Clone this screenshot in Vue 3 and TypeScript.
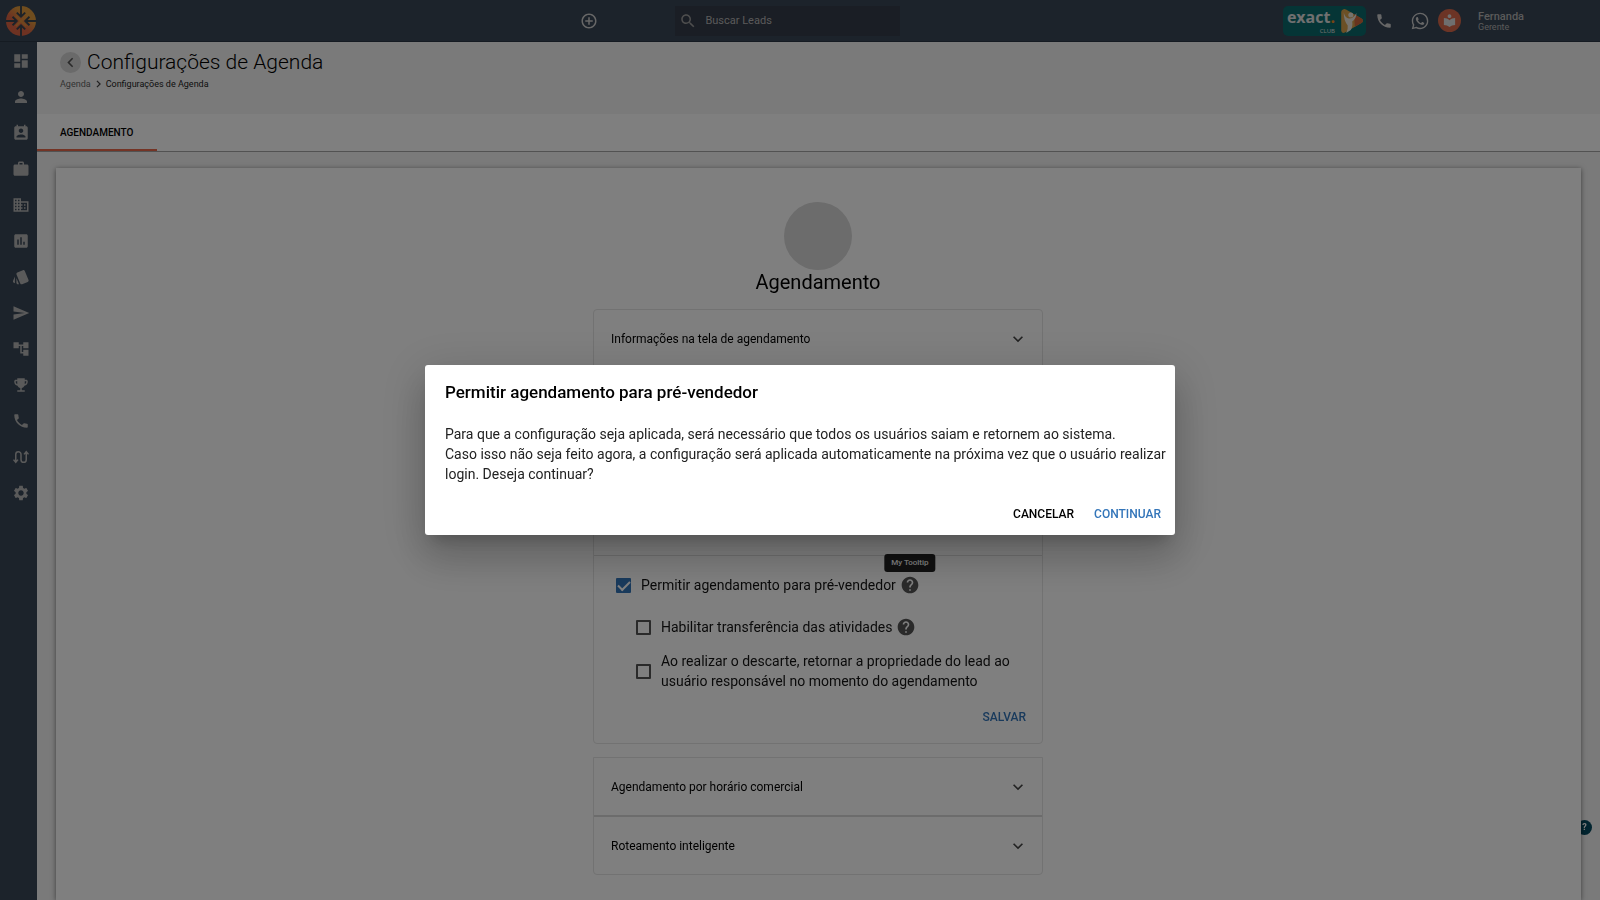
<script setup lang="ts">
import { ref } from 'vue'

interface NavItem {
  label: string
  path: string
  stroke?: boolean
}

const phonePath =
  'M6.62 10.79c1.44 2.83 3.76 5.14 6.59 6.59l2.2-2.2c.27-.27.67-.36 1.02-.24 1.12.37 2.33.57 3.57.57.55 0 1 .45 1 1V20c0 .55-.45 1-1 1-9.39 0-17-7.61-17-17 0-.55.45-1 1-1h3.5c.55 0 1 .45 1 1 0 1.25.2 2.45.57 3.57.11.35.03.74-.25 1.02l-2.2 2.2z'
const helpPath =
  'M12 2C6.48 2 2 6.48 2 12s4.48 10 10 10 10-4.48 10-10S17.52 2 12 2zm1 17h-2v-2h2v2zm2.07-7.75l-.9.92C13.45 12.9 13 13.5 13 15h-2v-.5c0-1.1.45-2.1 1.17-2.83l1.24-1.26c.37-.36.59-.86.59-1.41 0-1.1-.9-2-2-2s-2 .9-2 2H8c0-2.21 1.79-4 4-4s4 1.79 4 4c0 .88-.36 1.68-.93 2.25z'
const chevronDown = 'M7.41 8.59L12 13.17l4.59-4.58L18 10l-6 6-6-6z'

const navItems: NavItem[] = [
  { label: 'Painel', path: 'M3 13h8V3H3v10zm0 8h8v-6H3v6zm10 0h8V11h-8v10zm0-18v6h8V3h-8z' },
  { label: 'Leads', path: 'M12 12c2.21 0 4-1.79 4-4s-1.79-4-4-4-4 1.79-4 4 1.79 4 4 4zm0 2c-2.67 0-8 1.34-8 4v2h16v-2c0-2.66-5.33-4-8-4z' },
  { label: 'Agenda', path: 'M19 3h-1V1h-2v2H8V1H6v2H5c-1.11 0-2 .9-2 2v14c0 1.1.89 2 2 2h14c1.1 0 2-.9 2-2V5c0-1.1-.9-2-2-2zm-7 3c1.66 0 3 1.34 3 3s-1.34 3-3 3-3-1.34-3-3 1.34-3 3-3zm6 12H6v-1c0-2 4-3.1 6-3.1s6 1.1 6 3.1v1z' },
  { label: 'Vendas', path: 'M20 6h-4V4c0-1.11-.89-2-2-2h-4c-1.11 0-2 .89-2 2v2H4c-1.11 0-1.99.89-1.99 2L2 19c0 1.11.89 2 2 2h16c1.11 0 2-.89 2-2V8c0-1.11-.89-2-2-2zm-6 0h-4V4h4v2z' },
  { label: 'Empresas', path: 'M12 7V3H2v18h20V7H12zM6 19H4v-2h2v2zm0-4H4v-2h2v2zm0-4H4V9h2v2zm0-4H4V5h2v2zm4 12H8v-2h2v2zm0-4H8v-2h2v2zm0-4H8V9h2v2zm0-4H8V5h2v2zm10 12h-8v-2h2v-2h-2v-2h2v-2h-2V9h8v10zm-2-8h-2v2h2v-2zm0 4h-2v2h2v-2z' },
  { label: 'Relatórios', path: 'M19 3H5c-1.1 0-2 .9-2 2v14c0 1.1.9 2 2 2h14c1.1 0 2-.9 2-2V5c0-1.1-.9-2-2-2zM9 17H7v-7h2v7zm4 0h-2V7h2v10zm4 0h-2v-4h2v4z' },
  { label: 'Cartões', path: 'M2.53 19.65l1.34.56v-9.03l-2.43 5.86c-.41 1.02.08 2.19 1.09 2.61zm19.5-3.7L17.07 3.98c-.31-.75-1.04-1.21-1.81-1.23-.26 0-.53.04-.79.15L7.1 5.95c-.75.31-1.21 1.03-1.23 1.8-.01.27.04.54.15.8l4.96 11.97c.31.76 1.05 1.22 1.83 1.23.26 0 .52-.05.77-.15l7.36-3.05c1.02-.42 1.51-1.59 1.09-2.6zM5.88 19.75c0 1.1.9 2 2 2h1.45l-3.45-8.34v6.34z' },
  { label: 'Envios', path: 'M2.01 21L23 12 2.01 3 2 10l15 2-15 2z' },
  { label: 'Fluxos', path: 'M22 11V3h-7v3H9V3H2v8h7V8h2v10h4v3h7v-8h-7v3h-2V8h2v3z' },
  { label: 'Metas', path: 'M19 5h-2V3H7v2H5c-1.1 0-2 .9-2 2v1c0 2.55 1.92 4.63 4.39 4.94.63 1.5 1.98 2.63 3.61 2.96V19H7v2h10v-2h-4v-3.1c1.63-.33 2.98-1.46 3.61-2.96C19.08 12.63 21 10.55 21 8V7c0-1.1-.9-2-2-2zM5 8V7h2v3.82C5.84 10.4 5 9.3 5 8zm14 0c0 1.3-.84 2.4-2 2.82V7h2v1z' },
  { label: 'Ligações', path: phonePath },
  { label: 'Integrações', path: 'M2 15.5l3 3.500 3-3.500M5 18V8.500a3.500 3.500 0 0 1 7 0v7a3.500 3.500 0 0 0 7 0V6M16 8.500l3-3.500 3 3.500', stroke: true },
  { label: 'Configurações', path: 'M19.14 12.94c.04-.3.06-.61.06-.94 0-.32-.02-.64-.07-.94l2.030-1.580c.18-.14.23-.41.12-.61l-1.920-3.320c-.12-.22-.37-.29-.59-.22l-2.390.96c-.5-.38-1.030-.7-1.620-.94l-.36-2.540c-.04-.24-.24-.41-.48-.41h-3.840c-.24 0-.43.17-.47.41l-.36 2.540c-.59.24-1.130.57-1.620.94l-2.390-.96c-.22-.08-.47 0-.59.22L2.740 8.870c-.12.21-.08.47.12.61l2.030 1.580c-.05.3-.09.63-.09.94s.02.64.07.94l-2.030 1.580c-.18.14-.23.41-.12.61l1.920 3.320c.12.22.37.29.59.22l2.390-.96c.5.38 1.030.7 1.620.94l.36 2.540c.05.24.24.41.48.41h3.840c.24 0 .44-.17.47-.41l.36-2.540c.59-.24 1.130-.56 1.620-.94l2.390.96c.22.08.47 0 .59-.22l1.920-3.320c.12-.22.07-.47-.12-.61l-2.010-1.580zM12 15.600c-1.980 0-3.600-1.620-3.600-3.600s1.620-3.600 3.600-3.600 3.600 1.620 3.600 3.600-1.620 3.600-3.600 3.600z' },
]

const closedSections: string[] = ['Agendamento por horário comercial', 'Roteamento inteligente']

const allowScheduling = ref(true)
const enableTransfer = ref(false)
const returnOwnership = ref(false)
const dialogOpen = ref(true)
</script>

<template>
  <div class="shell">
    <header class="topbar">
      <a href="#" class="brand" aria-label="Exact">
        <svg viewBox="0 0 32 32" width="30" height="30">
          <defs>
            <linearGradient id="brandFill" x1="1" y1="0" x2="0.2" y2="1">
              <stop offset="0.35" stop-color="#e09a3c" />
              <stop offset="0.65" stop-color="#dd6444" />
            </linearGradient>
          </defs>
          <circle cx="16" cy="16" r="16" fill="url(#brandFill)" />
          <g fill="none" stroke="#38444f" stroke-width="2">
            <path d="M16 0v11M16 32V21M0 16h11M32 16H21" />
            <path d="M11.500 7l4.500 4.500L20.500 7M11.500 25l4.500-4.500 4.500 4.500M7 11.500l4.500 4.500L7 20.500M25 11.500L20.500 16l4.500 4.500" />
          </g>
          <path d="M10.500 10.500l11 11M21.500 10.500l-11 11" stroke="#e0903c" stroke-width="2" />
        </svg>
      </a>
      <div class="tools">
        <button type="button" class="plain" aria-label="Adicionar">
          <svg viewBox="0 0 24 24" width="18" height="18"><path fill="currentColor" d="M13 7h-2v4H7v2h4v4h2v-4h4v-2h-4V7zm-1-5C6.480 2 2 6.480 2 12s4.480 10 10 10 10-4.480 10-10S17.520 2 12 2zm0 18c-4.410 0-8-3.590-8-8s3.590-8 8-8 8 3.590 8 8-3.590 8-8 8z" /></svg>
        </button>
        <label class="search">
          <svg viewBox="0 0 24 24" width="18" height="18"><path fill="currentColor" d="M15.500 14h-.79l-.28-.27C15.410 12.590 16 11.110 16 9.500 16 5.910 13.090 3 9.500 3S3 5.910 3 9.500 5.910 16 9.500 16c1.610 0 3.090-.59 4.230-1.570l.27.28v.79l5 4.990L20.490 19l-4.990-5zm-6 0C7.010 14 5 11.990 5 9.500S7.010 5 9.500 5 14 7.010 14 9.500 11.990 14 9.500 14z" /></svg>
          <input type="search" placeholder="Buscar Leads" aria-label="Buscar Leads" />
        </label>
      </div>
      <div class="account">
        <a href="#" class="club" aria-label="Exact Club">
          <span class="club-name">
            <span class="club-title">exact<i>.</i></span>
            <span class="club-sub">CLUB</span>
          </span>
          <svg viewBox="0 0 24 26" width="24" height="26">
            <path d="M3 1.500Q4 .6 6 1.400L21.500 10.500q2.800 2 .4 4.200L5 24.500Q1.500 26 1.200 22.500V4Q1.300 2 3 1.500z" fill="#d9a04a" />
            <path d="M14 6l7.500 4.500q2.800 2 .4 4.200l-7 4z" fill="#d0663c" />
            <circle cx="10.800" cy="7" r="2.500" fill="#ece7dc" />
            <path d="M3.800 4.500Q5 10 9 10.500q4 .3 7.500-5.500-.3 6-4.300 8.500.8 5-1.400 8.500l-4.600 3q2-4 1.500-7.500Q3.500 12 3.800 4.500z" fill="#ece7dc" />
          </svg>
        </a>
        <button type="button" class="plain phone" aria-label="Telefone">
          <svg viewBox="0 0 24 24" width="18" height="18"><path fill="currentColor" :d="phonePath" /></svg>
        </button>
        <button type="button" class="plain whats" aria-label="WhatsApp">
          <svg viewBox="0 0 24 24" width="20" height="20"><path fill="currentColor" d="M12.040 2c-5.460 0-9.910 4.450-9.910 9.910 0 1.750.46 3.450 1.320 4.950L2.050 22l5.250-1.380c1.450.79 3.080 1.210 4.740 1.210 5.460 0 9.910-4.450 9.910-9.910 0-2.650-1.030-5.140-2.900-7.010A9.816 9.816 0 0 0 12.040 2m.01 1.670c2.200 0 4.260.86 5.820 2.420a8.225 8.225 0 0 1 2.410 5.830c0 4.540-3.700 8.230-8.240 8.230-1.480 0-2.930-.39-4.190-1.150l-.3-.17-3.120.82.83-3.040-.2-.32a8.188 8.188 0 0 1-1.260-4.380c.01-4.540 3.700-8.240 8.250-8.240M8.530 7.330c-.16 0-.43.06-.66.31-.22.25-.87.86-.87 2.070 0 1.220.89 2.390 1 2.560.14.17 1.760 2.670 4.250 3.730.59.27 1.050.42 1.410.53.59.19 1.130.16 1.560.1.48-.07 1.460-.6 1.670-1.180.21-.58.21-1.070.15-1.180-.07-.1-.23-.16-.48-.27-.25-.14-1.470-.74-1.690-.82-.23-.08-.37-.12-.56.12-.16.25-.64.81-.78.97-.15.17-.29.19-.53.07-.26-.13-1.060-.39-2-1.230-.74-.66-1.230-1.470-1.380-1.720-.12-.24-.01-.39.11-.5.11-.11.27-.29.37-.44.13-.14.17-.25.25-.41.08-.17.04-.31-.02-.43-.06-.11-.56-1.350-.77-1.840-.2-.48-.4-.42-.56-.43-.14 0-.3-.01-.47-.01z" /></svg>
        </button>
        <span class="avatar">
          <svg viewBox="0 0 24 24" width="15" height="15"><path fill="#dedede" d="M12 11.550C9.640 9.350 6.480 8 3 8v11c3.480 0 6.640 1.350 9 3.550 2.360-2.190 5.520-3.550 9-3.550V8c-3.480 0-6.640 1.350-9 3.550zM12 8c1.660 0 3-1.340 3-3s-1.340-3-3-3-3 1.340-3 3 1.340 3 3 3z" /></svg>
        </span>
        <div class="user">
          <strong>Fernanda</strong>
          <span>Gerente</span>
        </div>
      </div>
    </header>

    <div class="body">
      <nav class="sidebar" aria-label="Menu principal">
        <a v-for="item in navItems" :key="item.label" href="#" :aria-label="item.label">
          <svg viewBox="0 0 24 24" width="18" height="18">
            <path v-if="item.stroke" :d="item.path" fill="none" stroke="currentColor" stroke-width="2" />
            <path v-else :d="item.path" fill="currentColor" />
          </svg>
        </a>
      </nav>

      <main class="page">
        <div class="heading">
          <div class="title-row">
            <button type="button" class="back" aria-label="Voltar">
              <svg viewBox="0 0 24 24" width="19" height="19"><path fill="currentColor" d="M15.410 7.410L14 6l-6 6 6 6 1.410-1.410L10.830 12z" /></svg>
            </button>
            <h1>Configurações de Agenda</h1>
          </div>
          <div class="crumbs">
            <a href="#">Agenda</a>
            <svg viewBox="0 0 8 12" width="5" height="8"><path d="M1.500 1l5 5-5 5" fill="none" stroke="#444" stroke-width="2" /></svg>
            <span>Configurações de Agenda</span>
          </div>
        </div>
        <div class="tabs" role="tablist">
          <button type="button" role="tab" aria-selected="true">AGENDAMENTO</button>
        </div>

        <div class="card">
          <div class="disc"></div>
          <h2>Agendamento</h2>
          <div class="group">
            <button type="button" class="row">
              <span>Informações na tela de agendamento</span>
              <svg viewBox="0 0 24 24" width="20" height="20"><path fill="currentColor" :d="chevronDown" /></svg>
            </button>
            <div class="gap"></div>
            <form class="options" @submit.prevent>
              <div class="option">
                <input id="allow" v-model="allowScheduling" type="checkbox" />
                <label for="allow">Permitir agendamento para pré-vendedor</label>
                <span class="hint">
                  <svg viewBox="0 0 24 24" width="20" height="20"><path fill="currentColor" :d="helpPath" /></svg>
                  <span class="tooltip" role="tooltip">My Tooltip</span>
                </span>
              </div>
              <div class="option nested">
                <input id="transfer" v-model="enableTransfer" type="checkbox" />
                <label for="transfer">Habilitar transferência das atividades</label>
                <span class="hint">
                  <svg viewBox="0 0 24 24" width="20" height="20"><path fill="currentColor" :d="helpPath" /></svg>
                </span>
              </div>
              <div class="option nested">
                <input id="ownership" v-model="returnOwnership" type="checkbox" />
                <label for="ownership">Ao realizar o descarte, retornar a propriedade do lead ao<br />usuário responsável no momento do agendamento</label>
              </div>
              <button type="submit" class="save">SALVAR</button>
            </form>
          </div>
          <div class="group lower">
            <button v-for="name in closedSections" :key="name" type="button" class="row">
              <span>{{ name }}</span>
              <svg viewBox="0 0 24 24" width="20" height="20"><path fill="currentColor" :d="chevronDown" /></svg>
            </button>
          </div>
        </div>
      </main>
    </div>

    <button type="button" class="support" aria-label="Ajuda">?</button>

    <div v-if="dialogOpen" class="backdrop">
      <section class="dialog" role="dialog" aria-modal="true" aria-labelledby="dialog-title">
        <h2 id="dialog-title">Permitir agendamento para pré-vendedor</h2>
        <p>
          Para que a configuração seja aplicada, será necessário que todos os usuários saiam e retornem ao sistema.<br />
          Caso isso não seja feito agora, a configuração será aplicada automaticamente na próxima vez que o usuário realizar login. Deseja continuar?
        </p>
        <div class="actions">
          <button type="button" @click="dialogOpen = false">CANCELAR</button>
          <button type="button" class="primary" @click="dialogOpen = false">CONTINUAR</button>
        </div>
      </section>
    </div>
  </div>
</template>

<style>
body {
  margin: 0;
}
</style>

<style scoped>
* {
  box-sizing: border-box;
}
.shell {
  display: flex;
  flex-direction: column;
  min-height: 100vh;
  font-family: Roboto, "Liberation Sans", sans-serif;
  font-size: 14px;
  color: #000;
  background: #f4f4f4;
}
svg {
  display: block;
  flex: none;
}
button {
  font: inherit;
  color: inherit;
  background: none;
  border: 0;
  padding: 0;
  cursor: pointer;
}
.topbar {
  display: grid;
  grid-template-columns: 37px 544fr auto 383fr auto;
  align-items: center;
  height: 42px;
  background: #384656;
  color: #cfcfcf;
  border-bottom: 1px solid #2a3644;
}
.brand {
  padding-left: 6px;
}
.tools {
  grid-column: 3;
  display: flex;
  align-items: center;
  gap: 77px;
}
.plain {
  display: flex;
}
.search {
  display: flex;
  align-items: center;
  gap: 8px;
  width: 225px;
  height: 30px;
  padding-left: 4px;
  background: #343d4b;
  color: #9c9c9c;
}
.search input {
  flex: 1;
  min-width: 0;
  padding: 0;
  border: 0;
  outline: 0;
  background: none;
  font: 11px Roboto, "Liberation Sans", sans-serif;
  color: #b4b4b4;
}
.search input::placeholder {
  color: #b4b4b4;
  opacity: 1;
}
.account {
  grid-column: 5;
  display: flex;
  align-items: center;
}
.club {
  display: flex;
  align-items: center;
  justify-content: flex-end;
  gap: 5px;
  width: 83px;
  height: 30px;
  padding-right: 2px;
  border-radius: 5px;
  background: #0a6a6c;
  color: #e0e0e0;
  text-decoration: none;
}
.club-name {
  display: flex;
  flex-direction: column;
  align-items: flex-end;
}
.club-title {
  font: 700 16px/20px "Open Sans", sans-serif;
}
.club-title i {
  font-style: normal;
  color: #f08a24;
}
.club-sub {
  font: 6px/8px "Open Sans", sans-serif;
}
.phone {
  margin-left: 9px;
}
.whats {
  margin-left: 17px;
}
.avatar {
  display: grid;
  place-items: center;
  width: 23px;
  height: 23px;
  margin-left: 8px;
  border-radius: 50%;
  background: #d9694b;
}
.user {
  display: flex;
  flex-direction: column;
  width: 139px;
  padding: 2px 0 0 17px;
  font-size: 9px;
  line-height: 11px;
  color: #b4b4b4;
}
.user strong {
  font-size: 11px;
  font-weight: 500;
}
.body {
  flex: 1;
  display: flex;
}
.sidebar {
  flex: none;
  width: 37px;
  padding-top: 1px;
  background: #384656;
  color: #b4b4b4;
}
.sidebar a {
  display: flex;
  align-items: center;
  height: 36px;
  padding-left: 12px;
  color: inherit;
}
.page {
  flex: 1;
  min-width: 0;
  display: flex;
  flex-direction: column;
}
.heading {
  height: 72px;
  padding: 8px 23px 0;
}
.title-row {
  display: flex;
  align-items: center;
  gap: 6px;
}
.back {
  display: grid;
  place-items: center;
  width: 21px;
  height: 21px;
  border-radius: 50%;
  background: #d4d4d4;
  color: #555;
}
h1 {
  margin: 0;
  font-size: 21px;
  line-height: 24px;
  font-weight: 300;
}
.crumbs {
  display: flex;
  align-items: center;
  gap: 5px;
  margin-top: 4px;
  font-size: 9px;
  line-height: 12px;
  color: #222;
}
.crumbs a {
  color: #666;
  text-decoration: none;
}
.tabs {
  display: flex;
  height: 38px;
  background: #fff;
  border-bottom: 1px solid #a4a4a4;
}
.tabs button {
  width: 120px;
  padding: 2px 0 0 23px;
  border-bottom: 2px solid #e8694a;
  text-align: left;
  font-size: 10px;
  font-weight: 500;
}
.card {
  position: relative;
  z-index: 1;
  flex: 1;
  display: flex;
  flex-direction: column;
  align-items: center;
  margin: 16px 19px 0;
  padding: 34px 17px 25px 16px;
  background: #fff;
  box-shadow: 0 1px 5px rgba(0, 0, 0, 0.5);
}
.disc {
  width: 68px;
  height: 68px;
  border-radius: 50%;
  background: #d8d8d8;
}
.card h2 {
  margin: 0;
  font-size: 20px;
  line-height: 24px;
  font-weight: 400;
}
.group {
  width: 450px;
  max-width: 100%;
  margin-top: 15px;
  border: 1px solid #e4e4e4;
  border-radius: 4px;
}
.group.lower {
  margin-top: 13px;
  border-radius: 0 0 4px 4px;
}
.row {
  display: flex;
  align-items: center;
  justify-content: space-between;
  width: 100%;
  height: 57px;
  padding: 0 14px 0 17px;
  font-size: 12px;
}
.row svg {
  color: #444;
}
.row + .row {
  height: 59px;
  border-top: 2px solid #d8d8d8;
}
.gap {
  height: 188px;
}
.options {
  display: flex;
  flex-direction: column;
  border-top: 1px solid #dcdcdc;
  padding: 18px 16px 17px 22px;
}
.option {
  display: flex;
  align-items: center;
  min-height: 22px;
  line-height: 20px;
  color: #141414;
}
.nested {
  margin: 20px 0 0 20px;
}
.nested + .nested {
  margin-top: 13px;
}
.option input {
  appearance: none;
  flex: none;
  display: grid;
  place-items: center;
  width: 15px;
  height: 15px;
  margin: 0 10px 0 0;
  border: 2px solid #555;
  border-radius: 1px;
}
.option input:checked {
  border-color: #3375b9;
  background: #3375b9;
}
.option input:checked::after {
  content: "";
  width: 10px;
  height: 5px;
  border: solid #fff;
  border-width: 0 0 2px 2px;
  transform: translateY(-1px) rotate(-45deg);
}
.hint {
  position: relative;
  margin-left: 4px;
  color: #555;
}
.tooltip {
  position: absolute;
  bottom: 23px;
  left: 50%;
  transform: translateX(-50%);
  padding: 0 7px;
  border-radius: 3px;
  background: #222;
  color: #fff;
  font-size: 8px;
  line-height: 18px;
  font-weight: 500;
  white-space: nowrap;
}
.save {
  align-self: flex-end;
  margin-top: 17px;
  font-size: 12px;
  line-height: 18px;
  font-weight: 500;
  color: #3375b9;
}
.support {
  position: fixed;
  right: 8px;
  bottom: 65px;
  width: 15px;
  height: 15px;
  border-radius: 50%;
  background: #044a60;
  color: #fff;
  font-size: 9px;
  line-height: 15px;
  font-weight: 700;
}
.backdrop {
  position: fixed;
  inset: 0;
  z-index: 2;
  display: grid;
  place-items: center;
  background: rgba(0, 0, 0, 0.5);
}
.dialog {
  width: 750px;
  max-width: calc(100% - 64px);
  padding: 14px 0 10px;
  border-radius: 3px;
  background: #fff;
  box-shadow: 0 11px 15px -7px rgba(0, 0, 0, 0.2), 0 24px 38px 3px rgba(0, 0, 0, 0.14), 0 9px 46px 8px rgba(0, 0, 0, 0.12);
}
.dialog h2 {
  margin: 0;
  padding: 0 20px;
  font-size: 17px;
  line-height: 26px;
  font-weight: 500;
}
.dialog p {
  margin: 19px 0 0;
  padding: 0 4px 0 20px;
  line-height: 20px;
  color: #222;
}
.actions {
  display: flex;
  justify-content: flex-end;
  gap: 20px;
  margin-top: 19px;
  padding-right: 14px;
  font-size: 12px;
  line-height: 22px;
  font-weight: 500;
}
.primary {
  color: #3375b9;
}
</style>
